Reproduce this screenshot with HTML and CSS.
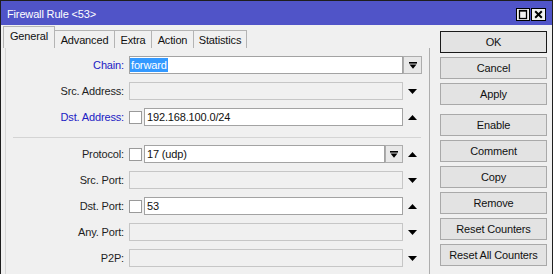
FILE: index.html
```html
<!DOCTYPE html>
<html>
<head>
<meta charset="utf-8">
<link rel="stylesheet" href="styles.css">
</head>
<body>
<div class="window">
  <div class="titlebar">
    <span class="title">Firewall Rule &lt;53&gt;</span>
    <div class="winbtns">
      <svg class="winbtn" width="14" height="13" viewBox="0 0 14 13"><rect x="0.5" y="0.5" width="13" height="12" fill="#f0f0f0" stroke="#000"/><rect x="3.5" y="2.5" width="7" height="8" fill="none" stroke="#000" stroke-width="1.3"/><rect x="3" y="2" width="8" height="1.6" fill="#000"/></svg>
      <svg class="winbtn" width="15" height="13" viewBox="0 0 15 13"><rect x="0.5" y="0.5" width="14" height="12" fill="#f0f0f0" stroke="#000"/><path d="M4.2 3.2 L10.8 9.8 M10.8 3.2 L4.2 9.8" stroke="#000" stroke-width="2"/></svg>
    </div>
  </div>
  <div class="body">
    <div class="main">
      <div class="tabs">
        <div class="tab active w-general">General</div>
        <div class="tab w-advanced">Advanced</div>
        <div class="tab w-extra">Extra</div>
        <div class="tab w-action">Action</div>
        <div class="tab w-stats">Statistics</div>
      </div>
      <div class="panel">
        <div class="row">
          <span class="lbl blue">Chain:</span>
          <div class="field"><div class="input chain"><span class="sel">forward</span></div></div>
          <span class="ddbtn wide"><svg width="8" height="7" viewBox="0 0 8 7"><rect x="0" y="0" width="8" height="1.6" fill="#000"/><polygon points="0.5,2.6 7.5,2.6 4,6.8" fill="#000"/></svg></span>
        </div>
        <div class="row">
          <span class="lbl">Src. Address:</span>
          <div class="field"><div class="input off"></div></div>
          <span class="arrow"><svg width="9" height="5" viewBox="0 0 9 5"><polygon points="0,0 9,0 4.5,5" fill="#000"/></svg></span>
        </div>
        <div class="row">
          <span class="lbl blue">Dst. Address:</span>
          <div class="field"><span class="check"></span><div class="input">192.168.100.0/24</div></div>
          <span class="arrow"><svg width="9" height="5" viewBox="0 0 9 5"><polygon points="0,5 9,5 4.5,0" fill="#000"/></svg></span>
        </div>
        <div class="sep"></div>
        <div class="row">
          <span class="lbl">Protocol:</span>
          <div class="field"><span class="check"></span><div class="input">17 (udp)</div><span class="ddbtn"><svg width="8" height="7" viewBox="0 0 8 7"><rect x="0" y="0" width="8" height="1.6" fill="#000"/><polygon points="0.5,2.6 7.5,2.6 4,6.8" fill="#000"/></svg></span></div>
          <span class="arrow"><svg width="9" height="5" viewBox="0 0 9 5"><polygon points="0,5 9,5 4.5,0" fill="#000"/></svg></span>
        </div>
        <div class="row">
          <span class="lbl">Src. Port:</span>
          <div class="field"><div class="input off"></div></div>
          <span class="arrow"><svg width="9" height="5" viewBox="0 0 9 5"><polygon points="0,0 9,0 4.5,5" fill="#000"/></svg></span>
        </div>
        <div class="row">
          <span class="lbl">Dst. Port:</span>
          <div class="field"><span class="check"></span><div class="input">53</div></div>
          <span class="arrow"><svg width="9" height="5" viewBox="0 0 9 5"><polygon points="0,5 9,5 4.5,0" fill="#000"/></svg></span>
        </div>
        <div class="row">
          <span class="lbl">Any. Port:</span>
          <div class="field"><div class="input off"></div></div>
          <span class="arrow"><svg width="9" height="5" viewBox="0 0 9 5"><polygon points="0,0 9,0 4.5,5" fill="#000"/></svg></span>
        </div>
        <div class="row">
          <span class="lbl">P2P:</span>
          <div class="field"><div class="input off"></div></div>
          <span class="arrow"><svg width="9" height="5" viewBox="0 0 9 5"><polygon points="0,0 9,0 4.5,5" fill="#000"/></svg></span>
        </div>
      </div>
    </div>
    <div class="buttons">
      <div class="btn default">OK</div>
      <div class="btn">Cancel</div>
      <div class="btn">Apply</div>
      <div class="btn group">Enable</div>
      <div class="btn">Comment</div>
      <div class="btn">Copy</div>
      <div class="btn">Remove</div>
      <div class="btn">Reset Counters</div>
      <div class="btn">Reset All Counters</div>
    </div>
  </div>
</div>
</body>
</html>
```
FILE: styles.css
```css
body {
  margin: 0;
  background: #f0f0f0;
  font-family: "Liberation Sans", Arial, sans-serif;
  font-size: 11px;
  color: #1a1a1a;
  letter-spacing: -0.15px;
}

.window {
  width: 553px;
  height: 274px;
  box-sizing: border-box;
  border: 1px solid #1e1e1e;
  border-bottom: none;
  display: flex;
  flex-direction: column;
  background: #f0f0f0;
  overflow: hidden;
}

.titlebar {
  height: 24px;
  flex: none;
  background: #5054c8;
  color: #fff;
  display: flex;
  align-items: center;
  justify-content: space-between;
  padding: 0 6px;
}

.title {
  font-size: 11px;
  padding-top: 1px;
}

.winbtns {
  display: flex;
  gap: 1px;
  padding-top: 2px;
}

.winbtn {
  display: block;
}

.body {
  flex: 1;
  display: flex;
}

.main {
  width: 439px;
  display: flex;
  flex-direction: column;
}

.tabs {
  height: 23px;
  flex: none;
  display: flex;
  align-items: flex-end;
  padding-left: 2px;
}

.tab {
  height: 18px;
  box-sizing: border-box;
  border-top: 1px solid #b4b4b4;
  border-right: 1px solid #b4b4b4;
  display: flex;
  align-items: center;
  justify-content: center;
  color: #111;
}

.tab.active {
  height: 22px;
  border-left: 1px solid #b4b4b4;
  padding-bottom: 3px;
}

.w-general { width: 52px; }
.w-advanced { width: 60px; }
.w-extra { width: 37px; }
.w-action { width: 42px; }
.w-stats { width: 53px; }

.panel {
  margin-left: 4px;
  width: 425px;
  flex: 1;
  box-sizing: border-box;
  border-left: 1px solid #d6d6d6;
  border-right: 1px solid #adadad;
  padding-top: 8px;
  display: flex;
  flex-direction: column;
  gap: 8px;
}

.row {
  display: flex;
  align-items: center;
  height: 18px;
}

.lbl {
  width: 118px;
  margin-right: 5px;
  text-align: right;
  color: #1e1e1e;
}

.lbl.blue {
  color: #2020c4;
}

.field {
  width: 274px;
  height: 18px;
  display: flex;
  align-items: center;
}

.check {
  width: 13px;
  height: 13px;
  box-sizing: border-box;
  border: 1px solid #9a9a9a;
  background: #fff;
  margin-right: 2px;
  flex: none;
}

.input {
  flex: 1;
  height: 18px;
  box-sizing: border-box;
  border: 1px solid #a3a3a3;
  background: #fff;
  padding-left: 2px;
  line-height: 16px;
  color: #111;
  white-space: nowrap;
}

.input.off {
  background: #f0f0f0;
  border-color: #c6c6c6;
}

.input.chain {
  padding-left: 0;
  padding-top: 1px;
  line-height: 14px;
}

.sel {
  display: inline-block;
  background: #3399ff;
  color: #fff;
  padding: 0 1px;
  height: 14px;
}

.ddbtn {
  width: 18px;
  height: 18px;
  box-sizing: border-box;
  border: 1px solid #adadad;
  background: #e8e8e8;
  display: flex;
  align-items: center;
  justify-content: center;
  flex: none;
}

.ddbtn.wide {
  width: 19px;
}

.ddbtn svg,
.arrow svg {
  display: block;
}

.arrow {
  width: 19px;
  display: flex;
  justify-content: center;
}

.sep {
  height: 1px;
  background: #d4d4d4;
  margin: 3px 8px -1px 7px;
}

.buttons {
  width: 107px;
  padding-top: 6px;
  display: flex;
  flex-direction: column;
  gap: 4px;
}

.btn {
  height: 22px;
  box-sizing: border-box;
  border: 1px solid #a9a9a9;
  background: #e3e3e3;
  display: flex;
  align-items: center;
  justify-content: center;
  color: #111;
}

.btn.default {
  border-color: #1a1a1a;
}

.btn.group {
  margin-top: 5px;
}
```
